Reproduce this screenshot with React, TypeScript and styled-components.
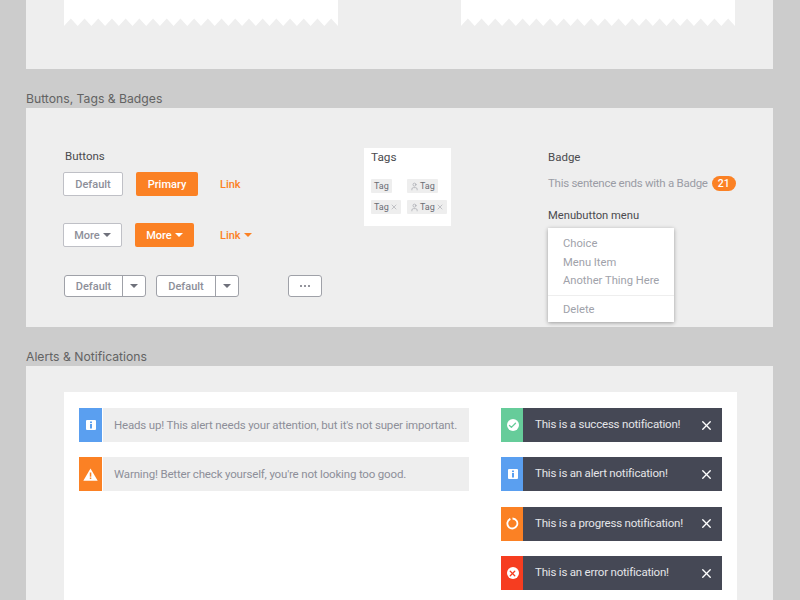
import * as React from "react"
import styled, { createGlobalStyle } from "styled-components"
import { Check, User, X } from "lucide-react"

const GlobalStyle = createGlobalStyle`
  html, body {
    margin: 0;
    height: 100%;
    overflow: hidden;
    background: #cccccc;
    font-family: "Roboto", "Liberation Sans", sans-serif;
  }
`

const orange = "#fb8124"
const greyText = "#8d8f99"

const Page = styled.div`
  width: 800px;
  height: 600px;
  overflow: hidden;
  box-sizing: border-box;
  padding: 0 27px 0 26px;
`

const Panel = styled.section`
  background: #eeeeee;
`

const TopPanel = styled(Panel)`
  height: 69px;
  box-sizing: border-box;
  padding: 0 38px;
  display: flex;
  gap: 123px;
`

const PaperSheet = styled.div`
  width: 274px;
  height: 26px;
  svg {
    display: block;
  }
`

const SectionTitle = styled.h2`
  margin: 0;
  height: 39px;
  box-sizing: border-box;
  padding-top: 22px;
  font: 400 12.2px/15px "Inter", sans-serif;
  color: #636363;
`

const ControlsPanel = styled(Panel)`
  height: 219px;
  box-sizing: border-box;
  display: grid;
  grid-template-columns: 300px 184px 1fr;
  padding: 40px 0 0 38px;
`

const Label = styled.div`
  font-size: 11.5px;
  line-height: 18px;
  color: #4b4b4f;
`

const ButtonRows = styled.div`
  display: flex;
  flex-direction: column;
  margin-top: -1px;
`

const ButtonsLabel = styled(Label)`
  padding-left: 1px;
`

const ButtonRow = styled.div<{ $top: number; $indent?: number }>`
  display: flex;
  align-items: center;
  margin-top: ${p => p.$top}px;
  margin-left: ${p => p.$indent || 0}px;
`

const Btn = styled.div<{ $w: number; $primary?: boolean }>`
  width: ${p => p.$w}px;
  height: 24px;
  box-sizing: border-box;
  display: flex;
  align-items: center;
  justify-content: center;
  gap: 3px;
  border-radius: 2px;
  font-size: 11px;
  font-weight: 500;
  color: ${p => (p.$primary ? "#ffffff" : greyText)};
  background: ${p => (p.$primary ? orange : "#ffffff")};
  border: ${p => (p.$primary ? "none" : "1.5px solid #bfc0c6")};
  margin-right: 13px;
`

const LinkBtn = styled.div<{ $left: number }>`
  margin-left: ${p => p.$left}px;
  display: flex;
  align-items: center;
  gap: 3px;
  font-size: 11px;
  font-weight: 500;
  color: ${orange};
`

const Caret = styled.span<{ $color: string }>`
  width: 0;
  height: 0;
  border-left: 4px solid transparent;
  border-right: 4px solid transparent;
  border-top: 4px solid ${p => p.$color};
`

const SplitBtn = styled.div<{ $w: number }>`
  width: ${p => p.$w}px;
  height: 22px;
  box-sizing: border-box;
  display: flex;
  margin-right: 10px;
  background: #ffffff;
  border: 1px solid #9fa1a8;
  border-radius: 3px;
`

const SplitMain = styled.div`
  flex: 1;
  display: flex;
  align-items: center;
  justify-content: center;
  font-size: 11px;
  font-weight: 500;
  color: ${greyText};
  border-right: 1px solid #9fa1a8;
`

const SplitCaret = styled.div`
  width: 22px;
  display: flex;
  align-items: center;
  justify-content: center;
`

const DotsBtn = styled(SplitBtn)`
  margin: 0 0 0 39px;
  align-items: center;
  justify-content: center;
  gap: 2px;
`

const Dot = styled.i`
  width: 2px;
  height: 2px;
  border-radius: 50%;
  background: #6f717b;
`

const TagCard = styled.div`
  width: 87px;
  height: 78px;
  box-sizing: border-box;
  background: #ffffff;
  padding: 0 7px;
`

const TagsLabel = styled(Label)`
  font-size: 11.8px;
`

const TagGrid = styled.div`
  display: grid;
  grid-template-columns: 36px auto;
  row-gap: 7px;
  margin-top: 13px;
  justify-items: start;
`

const Tag = styled.div`
  height: 14px;
  padding: 0 3px;
  display: flex;
  align-items: center;
  gap: 1px;
  background: #eeeeee;
  border-radius: 1px;
  font-size: 9px;
  color: #6b6d75;
  svg {
    color: #a9abb1;
  }
`

const SideColumn = styled.div`
  display: flex;
  flex-direction: column;
`

const BadgeLine = styled.div`
  margin-top: 10px;
  display: flex;
  align-items: center;
  gap: 4px;
  font-size: 11.5px;
  letter-spacing: -0.27px;
  line-height: 15px;
  color: #9a9ca5;
`

const Badge = styled.span`
  width: 24px;
  height: 15px;
  border-radius: 8px;
  background: ${orange};
  color: #ffffff;
  font-size: 10.5px;
  font-weight: 500;
  letter-spacing: 0;
  line-height: 15px;
  text-align: center;
`

const MenuLabel = styled(Label)`
  margin-top: 16px;
  font-size: 11.2px;
`

const Menu = styled.div`
  width: 126px;
  height: 94px;
  margin-top: 3px;
  box-sizing: border-box;
  padding-top: 7px;
  background: #ffffff;
  box-shadow: 0 1px 4px rgba(0, 0, 0, 0.35);
`

const MenuItem = styled.div`
  height: 18.5px;
  line-height: 18.5px;
  padding-left: 15px;
  font-size: 11.2px;
  color: #a0a2aa;
`

const MenuDivider = styled.div`
  height: 1px;
  margin: 4px 0 5px;
  background: #eeeeee;
`

const AlertsPanel = styled(Panel)`
  height: 300px;
  box-sizing: border-box;
  padding: 26px 36px 0 38px;
`

const WhiteSheet = styled.div`
  height: 260px;
  box-sizing: border-box;
  background: #ffffff;
  padding: 16px 15px;
  display: grid;
  grid-template-columns: 390px 221px;
  column-gap: 32px;
`

const Stack = styled.div`
  display: flex;
  flex-direction: column;
  gap: 15.4px;
`

const Row = styled.div`
  height: 34px;
  display: flex;
`

const IconStrip = styled.div<{ $bg: string }>`
  width: 23px;
  flex: none;
  display: flex;
  align-items: center;
  justify-content: center;
  background: ${p => p.$bg};
`

const AlertBody = styled.div`
  flex: 1;
  margin-left: 1px;
  padding-left: 11px;
  display: flex;
  align-items: center;
  background: #eeeeee;
  font-size: 11.5px;
  letter-spacing: -0.17px;
  white-space: nowrap;
  color: ${greyText};
`

const NoteBody = styled.div`
  flex: 1;
  margin-left: -1px;
  padding: 0 8px 2px 12px;
  display: flex;
  align-items: center;
  justify-content: space-between;
  background: #454855;
  font-size: 11.5px;
  letter-spacing: -0.2px;
  color: #e4e5e8;
  svg {
    color: #ffffff;
    margin-top: 2px;
  }
`

const InfoSquare = styled.div`
  width: 10px;
  height: 10px;
  border-radius: 1px;
  background: #ffffff;
  display: flex;
  align-items: center;
  justify-content: center;
  color: #5a9ff0;
`

const RoundIcon = styled.div<{ $color: string }>`
  width: 12px;
  height: 12px;
  border-radius: 50%;
  background: #ffffff;
  display: flex;
  align-items: center;
  justify-content: center;
  color: ${p => p.$color};
  svg {
    margin-top: 0;
  }
`

const zigzag = () => {
  const step = 13.7
  const pts = ["0,0", "274,0", "274,26"]
  for (let x = 274; x > 0; x -= step) {
    pts.push(`${x - step / 2},18.5`, `${Math.max(x - step, 0)},26`)
  }
  return pts.join(" ")
}

const Paper = () => (
  <PaperSheet>
    <svg width="274" height="26" viewBox="0 0 274 26">
      <polygon points={zigzag()} fill="#ffffff" />
    </svg>
  </PaperSheet>
)

const InfoIcon = () => (
  <InfoSquare>
    <svg width="4" height="8" viewBox="0 0 4 8">
      <rect x="1" y="0.5" width="2" height="1.6" fill="currentColor" />
      <rect x="1" y="3" width="2" height="4.5" fill="currentColor" />
    </svg>
  </InfoSquare>
)

const WarnIcon = () => (
  <svg width="15" height="13" viewBox="0 0 15 13">
    <path d="M7.5 0.5 L14.7 12.7 H0.3 Z" fill="#ffffff" />
    <rect x="6.8" y="4.5" width="1.5" height="4.2" fill={orange} />
    <rect x="6.8" y="9.5" width="1.5" height="1.5" fill={orange} />
  </svg>
)

const ProgressIcon = () => (
  <svg width="13" height="13" viewBox="0 0 13 13">
    <path d="M4.4 1.9 A5 5 0 1 0 6.5 1.5" fill="none" stroke="#ffffff" strokeWidth="1.8" />
  </svg>
)

const alerts = [
  { bg: "#5a9ff0", icon: <InfoIcon />, text: "Heads up! This alert needs your attention, but it's not super important." },
  { bg: orange, icon: <WarnIcon />, text: "Warning! Better check yourself, you're not looking too good." },
]

const notes = [
  {
    bg: "#66cc9a",
    icon: (
      <RoundIcon $color="#66cc9a">
        <Check size={9} strokeWidth={3.5} />
      </RoundIcon>
    ),
    text: "This is a success notification!",
  },
  { bg: "#5a9ff0", icon: <InfoIcon />, text: "This is an alert notification!" },
  { bg: orange, icon: <ProgressIcon />, text: "This is a progress notification!" },
  {
    bg: "#f63d20",
    icon: (
      <RoundIcon $color="#f63d20">
        <X size={9} strokeWidth={3.5} />
      </RoundIcon>
    ),
    text: "This is an error notification!",
  },
]

export default function App() {
  return (
    <Page>
      <GlobalStyle />
      <TopPanel>
        <Paper />
        <Paper />
      </TopPanel>

      <SectionTitle>Buttons, Tags &amp; Badges</SectionTitle>
      <ControlsPanel>
        <ButtonRows>
          <ButtonsLabel>Buttons</ButtonsLabel>
          <ButtonRow $top={7} $indent={-1}>
            <Btn $w={60}>Default</Btn>
            <Btn $w={62} $primary>Primary</Btn>
            <LinkBtn $left={9}>Link</LinkBtn>
          </ButtonRow>
          <ButtonRow $top={27} $indent={-1}>
            <Btn $w={59}>More <Caret $color="#6f717b" /></Btn>
            <Btn $w={59} $primary>More <Caret $color="#ffffff" /></Btn>
            <LinkBtn $left={13}>Link <Caret $color={orange} /></LinkBtn>
          </ButtonRow>
          <ButtonRow $top={28}>
            <SplitBtn $w={82}>
              <SplitMain>Default</SplitMain>
              <SplitCaret><Caret $color="#6f717b" /></SplitCaret>
            </SplitBtn>
            <SplitBtn $w={83}>
              <SplitMain>Default</SplitMain>
              <SplitCaret><Caret $color="#6f717b" /></SplitCaret>
            </SplitBtn>
            <DotsBtn $w={34}>
              <Dot /><Dot /><Dot />
            </DotsBtn>
          </ButtonRow>
        </ButtonRows>

        <TagCard>
          <TagsLabel>Tags</TagsLabel>
          <TagGrid>
            <Tag>Tag</Tag>
            <Tag><User size={9} />Tag</Tag>
            <Tag>Tag<X size={8} /></Tag>
            <Tag><User size={9} />Tag<X size={8} /></Tag>
          </TagGrid>
        </TagCard>

        <SideColumn>
          <Label>Badge</Label>
          <BadgeLine>This sentence ends with a Badge <Badge>21</Badge></BadgeLine>
          <MenuLabel>Menubutton menu</MenuLabel>
          <Menu>
            <MenuItem>Choice</MenuItem>
            <MenuItem>Menu Item</MenuItem>
            <MenuItem>Another Thing Here</MenuItem>
            <MenuDivider />
            <MenuItem>Delete</MenuItem>
          </Menu>
        </SideColumn>
      </ControlsPanel>

      <SectionTitle>Alerts &amp; Notifications</SectionTitle>
      <AlertsPanel>
        <WhiteSheet>
          <Stack>
            {alerts.map(a => (
              <Row key={a.text}>
                <IconStrip $bg={a.bg}>{a.icon}</IconStrip>
                <AlertBody>{a.text}</AlertBody>
              </Row>
            ))}
          </Stack>
          <Stack>
            {notes.map(n => (
              <Row key={n.text}>
                <IconStrip $bg={n.bg}>{n.icon}</IconStrip>
                <NoteBody>
                  {n.text}
                  <X size={15} strokeWidth={2.2} />
                </NoteBody>
              </Row>
            ))}
          </Stack>
        </WhiteSheet>
      </AlertsPanel>
    </Page>
  )
}
